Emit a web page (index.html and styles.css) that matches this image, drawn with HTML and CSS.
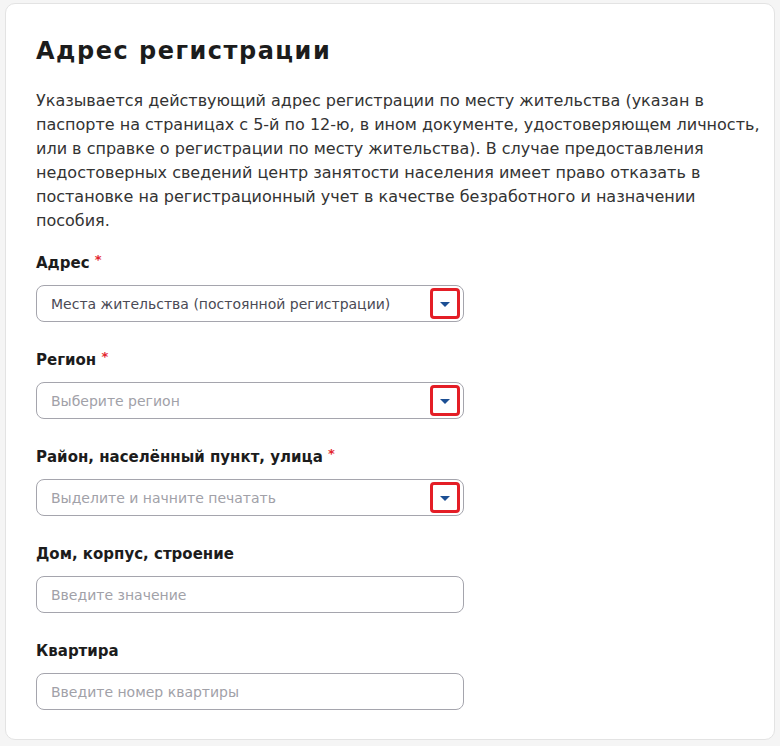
FILE: index.html
```html
<!DOCTYPE html>
<html lang="ru">
<head>
    <meta charset="UTF-8">
    <title>Адрес регистрации</title>
    <link rel="stylesheet" href="styles.css">
</head>
<body>

    <div class="card">
        <h1>Адрес регистрации</h1>
        <p class="hint">
            Указывается действующий адрес регистрации по месту жительства (указан в<br>
            паспорте на страницах с 5-й по 12-ю, в ином документе, удостоверяющем личность,<br>
            или в справке о регистрации по месту жительства). В случае предоставления<br>
            недостоверных сведений центр занятости населения имеет право отказать в<br>
            постановке на регистрационный учет в качестве безработного и назначении<br>
            пособия.
        </p>

        <div class="field">
            <label>Адрес <span class="req">*</span></label>
            <div class="input select">
                <span class="value">Места жительства (постоянной регистрации)</span>
                <span class="arrow-box"><span class="arrow"></span></span>
            </div>
        </div>

        <div class="field">
            <label>Регион <span class="req">*</span></label>
            <div class="input select">
                <span class="placeholder">Выберите регион</span>
                <span class="arrow-box"><span class="arrow"></span></span>
            </div>
        </div>

        <div class="field">
            <label>Район, населённый пункт, улица <span class="req">*</span></label>
            <div class="input select">
                <span class="placeholder">Выделите и начните печатать</span>
                <span class="arrow-box"><span class="arrow"></span></span>
            </div>
        </div>

        <div class="field">
            <label>Дом, корпус, строение</label>
            <div class="input">
                <span class="placeholder">Введите значение</span>
            </div>
        </div>

        <div class="field">
            <label>Квартира</label>
            <div class="input">
                <span class="placeholder">Введите номер квартиры</span>
            </div>
        </div>
    </div>

</body>
</html>
```

FILE: styles.css
```css
body {
    margin: 0;
    padding: 3px 5px 6px 5px;
    background-color: #f5f5f5;
    font-family: "DejaVu Sans", sans-serif;
    color: #1c1c1c;
}

.card {
    box-sizing: border-box;
    height: 737px;
    background: #ffffff;
    border: 1px solid #e3e3e3;
    border-radius: 10px;
    padding: 31px 30px 0 30px;
}

h1 {
    margin: 0;
    font-size: 24px;
    font-weight: bold;
    line-height: 32px;
    letter-spacing: 1.5px;
}

.hint {
    margin: 22px 0 0 0;
    font-size: 16px;
    line-height: 24px;
    color: #333333;
    white-space: nowrap;
}

.field {
    margin-top: 18px;
}

.field + .field {
    margin-top: 26px;
}

label {
    display: block;
    font-size: 15px;
    font-weight: bold;
    line-height: 24px;
    margin-bottom: 10px;
}

.req {
    color: #e3262f;
    font-size: 13px;
    vertical-align: top;
    line-height: 18px;
}

.input {
    position: relative;
    box-sizing: border-box;
    width: 428px;
    height: 37px;
    padding-left: 14px;
    border: 1px solid #a5a5ad;
    border-radius: 8px;
    display: flex;
    align-items: center;
    font-size: 14px;
}

.value {
    color: #4a4a55;
}

.placeholder {
    color: #a1a1a8;
}

.arrow-box {
    position: absolute;
    right: 3px;
    top: 2px;
    box-sizing: border-box;
    width: 30px;
    height: 31px;
    border: 3px solid #e41e26;
    border-radius: 4px;
    display: flex;
    align-items: center;
    justify-content: center;
}

.arrow {
    width: 0;
    height: 0;
    border-left: 5px solid transparent;
    border-right: 5px solid transparent;
    border-top: 5px solid #1c4f94;
    margin-top: 1px;
}
```
